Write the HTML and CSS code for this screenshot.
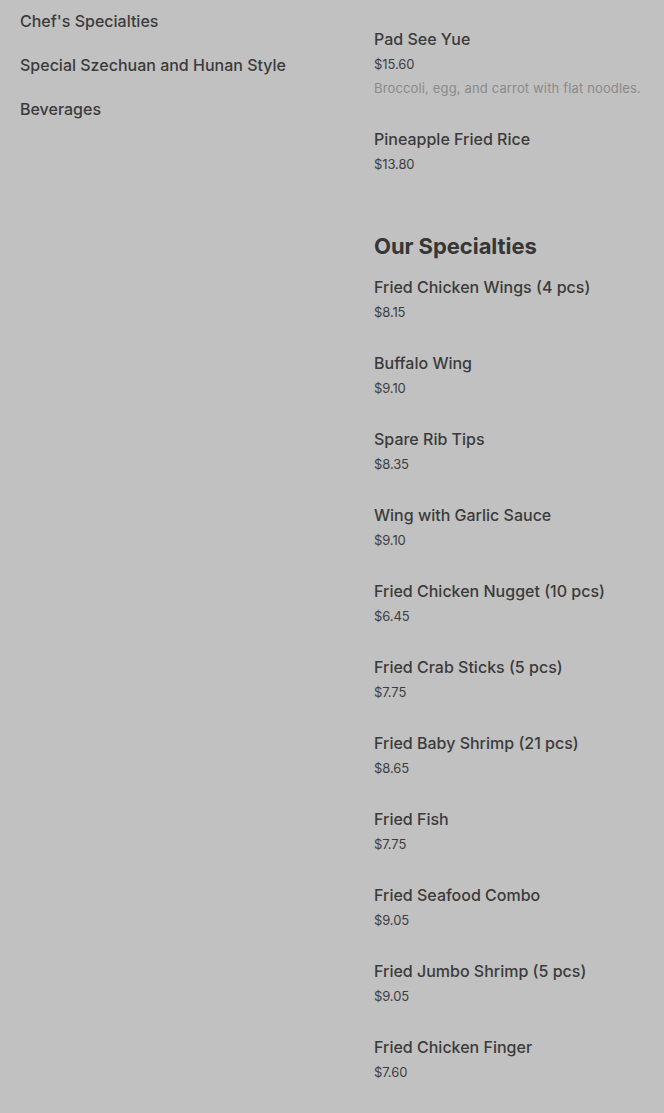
FILE: index.html
```html
<!DOCTYPE html>
<html lang="en">
<head>
<meta charset="utf-8">
<title>Menu</title>
<link rel="stylesheet" href="styles.css">
</head>
<body>
<div class="page">
  <nav class="categories">
    <a class="cat" href="#">Chef's Specialties</a>
    <a class="cat" href="#">Special Szechuan and Hunan Style</a>
    <a class="cat" href="#">Beverages</a>
  </nav>
  <main class="menu">
    <section class="section">
      <div class="item">
        <div class="name">Pad See Yue</div>
        <div class="price">$15.60</div>
        <div class="desc">Broccoli, egg, and carrot with flat noodles.</div>
      </div>
      <div class="item">
        <div class="name">Pineapple Fried Rice</div>
        <div class="price">$13.80</div>
      </div>
    </section>
    <section class="section">
      <h2 class="heading">Our Specialties</h2>
      <div class="item"><div class="name">Fried Chicken Wings (4 pcs)</div><div class="price">$8.15</div></div>
      <div class="item"><div class="name">Buffalo Wing</div><div class="price">$9.10</div></div>
      <div class="item"><div class="name">Spare Rib Tips</div><div class="price">$8.35</div></div>
      <div class="item"><div class="name">Wing with Garlic Sauce</div><div class="price">$9.10</div></div>
      <div class="item"><div class="name">Fried Chicken Nugget (10 pcs)</div><div class="price">$6.45</div></div>
      <div class="item"><div class="name">Fried Crab Sticks (5 pcs)</div><div class="price">$7.75</div></div>
      <div class="item"><div class="name">Fried Baby Shrimp (21 pcs)</div><div class="price">$8.65</div></div>
      <div class="item"><div class="name">Fried Fish</div><div class="price">$7.75</div></div>
      <div class="item"><div class="name">Fried Seafood Combo</div><div class="price">$9.05</div></div>
      <div class="item"><div class="name">Fried Jumbo Shrimp (5 pcs)</div><div class="price">$9.05</div></div>
      <div class="item"><div class="name">Fried Chicken Finger</div><div class="price">$7.60</div></div>
      <div class="item"><div class="name">Fried Scallop (10 pcs)</div><div class="price">$8.65</div></div>
    </section>
  </main>
</div>
</body>
</html>
```
FILE: styles.css
```css
html, body {
  margin: 0;
  padding: 0;
  background: #c1c1c1;
}
body {
  font-family: Inter, "Noto Sans", sans-serif;
  color: #3b3b3b;
}
.page {
  display: grid;
  grid-template-columns: 354px 1fr;
  padding-left: 20px;
}
.categories {
  display: flex;
  flex-direction: column;
  gap: 20px;
  padding-top: 9px;
}
.cat {
  font-size: 16px;
  font-weight: 500;
  line-height: 24px;
  color: #3b3b3b;
  text-decoration: none;
}
.menu {
  display: flex;
  flex-direction: column;
  gap: 54px;
  padding-top: 27px;
}
.section {
  display: flex;
  flex-direction: column;
  gap: 27px;
}
.heading {
  margin: 0 0 -14px 0;
  font-size: 22px;
  font-weight: 700;
  line-height: 32px;
  letter-spacing: -0.05px;
  color: #363636;
}
.item {
  display: flex;
  flex-direction: column;
}
.name {
  font-size: 16px;
  font-weight: 500;
  line-height: 25px;
}
.price {
  font-size: 13px;
  line-height: 24px;
  color: #3e3e3e;
  letter-spacing: -0.1px;
}
.desc {
  font-size: 13px;
  line-height: 24px;
  color: #8a8a8a;
  letter-spacing: 0.15px;
}
```
